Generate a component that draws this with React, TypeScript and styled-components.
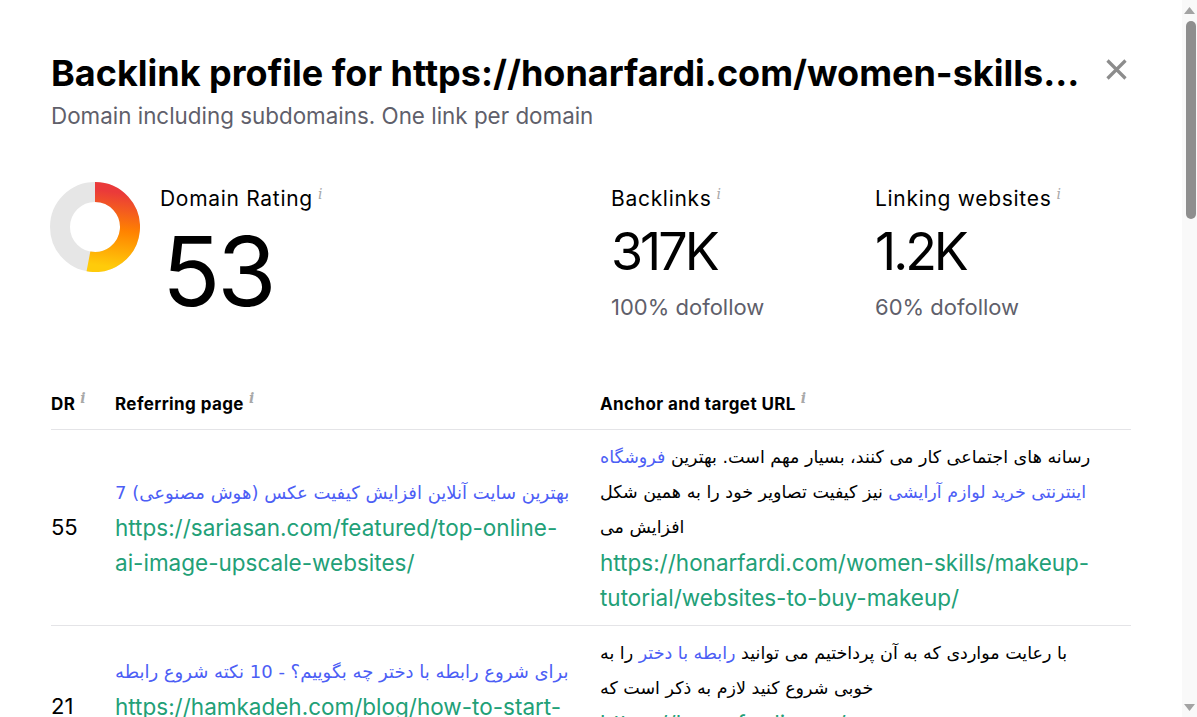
import React from "react";
import styled, { createGlobalStyle } from "styled-components";

const Global = createGlobalStyle`
  html, body { margin: 0; padding: 0; background: #fff; overflow: hidden; }
  body { font-family: Inter, "DejaVu Sans", sans-serif; color: #000; }
`;

const Shell = styled.div`
  display: flex;
  height: 100vh;
  overflow: hidden;
`;

const Main = styled.div`
  flex: 1;
  min-width: 0;
  overflow: hidden;
`;

const Rail = styled.div`
  flex: none;
  width: 15px;
  height: 100vh;
  background: #f9f9f9;
  display: flex;
  flex-direction: column;
  align-items: center;
`;

const RailArrow = styled.svg`
  flex: none;
  margin-top: 7px;
`;

const RailThumb = styled.div`
  width: 10px;
  height: 198px;
  margin-top: 7px;
  margin-left: 3px;
  border-radius: 5px;
  background: #8e8e8e;
`;

const RailSpacer = styled.div`
  flex: 1;
`;

const RailArrowDown = styled.svg`
  flex: none;
  margin-bottom: 6px;
`;

const Page = styled.div`
  padding: 51px 51px 0 51px;
  box-sizing: border-box;
`;

const Header = styled.div`
  display: flex;
  align-items: flex-start;
  gap: 16px;
`;

const TitleBlock = styled.div`
  flex: 1;
  min-width: 0;
`;

const Title = styled.h1`
  margin: 0;
  font-size: 36px;
  line-height: 44px;
  font-weight: 700;
  letter-spacing: 0px;
  white-space: nowrap;
  overflow: hidden;
  text-overflow: ellipsis;
`;

const Subtitle = styled.div`
  margin-top: 7px;
  font-size: 22.4px;
  line-height: 28px;
  color: #5f5f6b;
`;

const CloseButton = styled.button`
  border: 0;
  background: none;
  padding: 0;
  margin-top: 7px;
  margin-right: 3px;
  width: 23px;
  height: 23px;
  color: #8c8c8c;
  cursor: pointer;
  flex: none;
`;

const Metrics = styled.div`
  display: grid;
  grid-template-columns: 560px 264px 1fr;
  margin-top: 50px;
`;

const DrBlock = styled.div`
  display: flex;
  gap: 20px;
  align-items: flex-start;
`;

const DonutSvg = styled.svg`
  margin-top: 2px;
  margin-left: -1px;
  flex: none;
`;

const MetricLabel = styled.div`
  font-size: 21px;
  line-height: 28px;
  letter-spacing: 0.7px;
  white-space: nowrap;
`;

const Info = styled.span`
  font-family: "DejaVu Serif", serif;
  font-style: italic;
  font-size: 14px;
  letter-spacing: 0;
  color: #a8a8a8;
  vertical-align: 7px;
  margin-left: 5px;
`;

const BigValue = styled.div`
  font-size: 96px;
  line-height: 104px;
  letter-spacing: -3px;
  margin-top: 6px;
  margin-left: 2px;
`;

const Value = styled.div`
  font-size: 52px;
  line-height: 62px;
  letter-spacing: -3px;
  margin-top: 8px;
`;

const Sub = styled.div`
  font-size: 22px;
  line-height: 28px;
  color: #5f5f6b;
  margin-top: 10px;
`;

const Table = styled.div`
  margin-top: 54px;
  display: grid;
  grid-template-columns: 64px 485px 1fr;
`;

const Th = styled.div`
  font-size: 17px;
  font-weight: 700;
  letter-spacing: 0.4px;
  line-height: 22px;
  padding: 10px 0 14px;
  border-bottom: 1px solid #e4e4e7;
  white-space: nowrap;
`;

const Td = styled.div<{ $pr?: number }>`
  display: flex;
  flex-direction: column;
  justify-content: center;
  padding: 10px ${(p) => p.$pr ?? 0}px 10px 0;
  border-bottom: 1px solid #e4e4e7;
  font-size: 22px;
  line-height: 35px;
  min-width: 0;
`;

const AnchorText = styled.div`
  font-family: "DejaVu Sans", sans-serif;
  font-size: 17.5px;
  line-height: 35px;
`;

const Blue = styled.span`
  color: #4c5ef5;
`;

const TitleLink = styled.div`
  color: #4c5ef5;
  font-family: "DejaVu Sans", Inter, sans-serif;
  font-size: 18px;
  line-height: 35px;
`;

const Url = styled.div`
  color: #22a077;
  font-size: 22.5px;
  line-height: 35px;
  word-break: break-word;
`;

const R = 35;
const frac = 0.53;
const ang = frac * 2 * Math.PI;
const endX = 45 + R * Math.sin(ang);
const endY = 45 - R * Math.cos(ang);

const Donut = () => (
  <DonutSvg width="90" height="90" viewBox="0 0 90 90">
    <defs>
      <linearGradient id="dg" gradientUnits="userSpaceOnUse" x1="50" y1="8" x2="40" y2="82">
        <stop offset="0" stopColor="#ea3a3a" />
        <stop offset="0.5" stopColor="#ff8200" />
        <stop offset="1" stopColor="#ffcb0a" />
      </linearGradient>
    </defs>
    <circle cx="45" cy="45" r={R} fill="none" stroke="#e6e6e6" strokeWidth="20" />
    <path
      d={`M45 ${45 - R} A${R} ${R} 0 1 1 ${endX.toFixed(2)} ${endY.toFixed(2)}`}
      fill="none"
      stroke="url(#dg)"
      strokeWidth="20"
    />
  </DonutSvg>
);

const CloseIcon = () => (
  <svg width="23" height="23" viewBox="0 0 23 23">
    <path d="M2.5 2.5 L20.5 20.5 M20.5 2.5 L2.5 20.5" stroke="currentColor" strokeWidth="3.2" />
  </svg>
);

const I = () => <Info>i</Info>;

type Row = {
  dr: number;
  title: string;
  url: string;
  anchor: React.ReactNode;
  target: string;
};

const rows: Row[] = [
  {
    dr: 55,
    title: "بهترین سایت آنلاین افزایش کیفیت عکس (هوش مصنوعی) 7",
    url: "https://sariasan.com/featured/top-online-ai-image-upscale-websites/",
    anchor: (
      <>
        رسانه های اجتماعی کار می کنند، بسیار مهم است. بهترین{" "}
        <Blue>فروشگاه اینترنتی خرید لوازم آرایشی</Blue> نیز کیفیت تصاویر خود را به همین شکل افزایش می
      </>
    ),
    target: "https://honarfardi.com/women-skills/makeup-tutorial/websites-to-buy-makeup/",
  },
  {
    dr: 21,
    title: "برای شروع رابطه با دختر چه بگوییم؟ - 10 نکته شروع رابطه",
    url: "https://hamkadeh.com/blog/how-to-start-relationship-with-girl/",
    anchor: (
      <>
        با رعایت مواردی که به آن پرداختیم می توانید <Blue>رابطه با دختر</Blue> را به خوبی شروع کنید لازم به ذکر است که
      </>
    ),
    target: "https://honarfardi.com/women-skills/relationship/start-relationship-with-girl/",
  },
];

export default function App() {
  return (
    <>
      <Global />
      <Shell>
        <Main>
          <Page>
            <Header>
              <TitleBlock>
                <Title>Backlink profile for https://honarfardi.com/women-skills/makeup-tutorial/websites-to-buy-makeup/</Title>
                <Subtitle>Domain including subdomains. One link per domain</Subtitle>
              </TitleBlock>
              <CloseButton aria-label="Close">
                <CloseIcon />
              </CloseButton>
            </Header>

            <Metrics>
              <DrBlock>
                <Donut />
                <div>
                  <MetricLabel>
                    Domain Rating<I />
                  </MetricLabel>
                  <BigValue>53</BigValue>
                </div>
              </DrBlock>
              <div>
                <MetricLabel>
                  Backlinks<I />
                </MetricLabel>
                <Value>317K</Value>
                <Sub>100% dofollow</Sub>
              </div>
              <div>
                <MetricLabel>
                  Linking websites<I />
                </MetricLabel>
                <Value>1.2K</Value>
                <Sub>60% dofollow</Sub>
              </div>
            </Metrics>

            <Table>
              <Th>
                DR<I />
              </Th>
              <Th>
                Referring page<I />
              </Th>
              <Th>
                Anchor and target URL<I />
              </Th>
              {rows.map((r) => (
                <React.Fragment key={r.dr}>
                  <Td>{r.dr}</Td>
                  <Td $pr={23}>
                    <TitleLink>{r.title}</TitleLink>
                    <Url>{r.url}</Url>
                  </Td>
                  <Td $pr={24}>
                    <AnchorText>{r.anchor}</AnchorText>
                    <Url>{r.target}</Url>
                  </Td>
                </React.Fragment>
              ))}
            </Table>
          </Page>
        </Main>
        <Rail aria-hidden="true">
          <RailArrow width="11" height="7" viewBox="0 0 11 7">
            <path d="M5.5 0 L11 7 L0 7 Z" fill="#a3a3a3" />
          </RailArrow>
          <RailThumb />
          <RailSpacer />
          <RailArrowDown width="11" height="7" viewBox="0 0 11 7">
            <path d="M0 0 L11 0 L5.5 7 Z" fill="#a3a3a3" />
          </RailArrowDown>
        </Rail>
      </Shell>
    </>
  );
}
